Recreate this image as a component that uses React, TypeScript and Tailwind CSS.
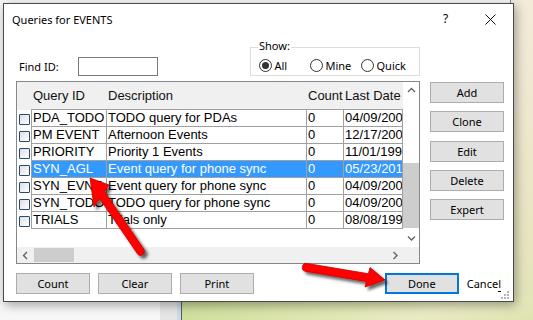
const rows = [
	{id: 'PDA_TODO', desc: 'TODO query for PDAs', count: '0', date: '04/09/2008'},
	{id: 'PM EVENT', desc: 'Afternoon Events', count: '0', date: '12/17/2009'},
	{id: 'PRIORITY', desc: 'Priority 1 Events', count: '0', date: '11/01/1994'},
	{id: 'SYN_AGL', desc: 'Event query for phone sync', count: '0', date: '05/23/2012', selected: true},
	{id: 'SYN_EVNT', desc: 'Event query for phone sync', count: '0', date: '04/09/2008'},
	{id: 'SYN_TODO', desc: 'TODO query for phone sync', count: '0', date: '04/09/2008'},
	{id: 'TRIALS', desc: 'Trials only', count: '0', date: '08/08/1999'}
];

function Btn({label, focus, className = ''}: {label: string; focus?: boolean; className?: string}) {
	return (
		<button
			className={`block w-[74px] h-[21px] bg-[#e1e1e1] text-[11px] leading-none text-black ${
				focus ? 'border-2 border-[#0078d7]' : 'border border-[#adadad]'
			} ${className}`}
		>
			{label}
		</button>
	);
}

function Radio({label, checked}: {label: string; checked?: boolean}) {
	return (
		<div className="w-[51px] flex items-center gap-[3px]">
			<div className="w-[13px] h-[13px] rounded-full border border-[#333] bg-white flex items-center justify-center">
				{checked && <div className="w-[7px] h-[7px] rounded-full bg-[#333]"/>}
			</div>
			<span className="text-[11px] leading-[14px]">{label}</span>
		</div>
	);
}

function Chevron({dir}: {dir: 'up' | 'down' | 'left' | 'right'}) {
	const d = {
		up: 'M1 5 L4.5 1.5 L8 5',
		down: 'M1 1.5 L4.5 5 L8 1.5',
		left: 'M5 1 L1.5 4.5 L5 8',
		right: 'M1.5 1 L5 4.5 L1.5 8'
	}[dir];
	const vertical = dir === 'up' || dir === 'down';
	return (
		<svg width={vertical ? 9 : 7} height={vertical ? 7 : 9} viewBox={vertical ? '0 0 9 7' : '0 0 7 9'}>
			<path d={d} fill="none" stroke="#606060" strokeWidth="1.3"/>
		</svg>
	);
}

export default function App() {
	const cell = 'h-[17px] border-b border-r border-[#a0a0a0] pl-[1px] overflow-hidden whitespace-nowrap';
	return (
		<div className="relative w-[533px] h-[320px] overflow-hidden bg-[linear-gradient(165deg,#f7f1e3_0%,#f0e7d0_55%,#e2e4b6_100%)] font-['Noto_Sans',sans-serif] text-black">
			{/* windows behind the dialog */}
			<div className="absolute left-0 top-0 w-[511px] h-[300px] bg-[#f6f6f6] border-r border-[#8a8a8a]"/>
			<div className="absolute left-0 top-[296px] w-[160px] h-[24px] bg-[#f7f7f7]"/>
			<div className="absolute left-[160px] top-[296px] w-[17px] h-[24px] bg-[#e6e6e6]"/>
			<div className="absolute left-[177px] top-[296px] w-[5px] h-[24px] bg-[#cfdbea] border-r border-[#5a5a5a]"/>
			<div className="absolute left-[182px] top-[296px] right-0 bottom-0 bg-[linear-gradient(160deg,#c8dc96_0%,#dfe6b0_45%,#eaeac4_70%,#dfe3b0_100%)]"/>

			{/* dialog */}
			<div className="absolute left-[3px] top-[3px] w-[511px] h-[299px] border border-[#4a4a4a] bg-white shadow-[2px_3px_10px_rgba(0,0,0,0.35)] flex flex-col">
				<div className="h-[30px] flex items-center pl-[8px]">
					<span className="text-[11px] leading-none">Queries for EVENTS</span>
					<div className="ml-auto flex h-full">
						<div className="w-[45px] h-full flex items-center justify-center text-[12px]">?</div>
						<div className="w-[45px] h-full flex items-center justify-center">
							<svg width="11" height="11" viewBox="0 0 11 11">
								<path d="M0.5 0.5 L10.5 10.5 M10.5 0.5 L0.5 10.5" stroke="#111" strokeWidth="1"/>
							</svg>
						</div>
					</div>
				</div>

				<div className="px-[12px] flex flex-col">
					{/* find + show */}
					<div className="h-[47px] flex items-start">
						<div className="mt-[23px] flex items-center">
							<span className="w-[62px] pl-[3px] text-[11px] leading-[14px]">Find ID:</span>
							<div className="w-[80px] h-[19px] border border-[#7a7a7a] bg-white"/>
						</div>
						<div className="ml-[92px] mt-[12.5px] relative w-[170px] h-[29px] border border-[#dcdcdc]">
							<span className="absolute left-[7px] top-[-9px] px-[1px] bg-white text-[11px] leading-[14px]">Show:</span>
							<div className="flex pt-[11px] pl-[7.5px]">
								<Radio label="All" checked/>
								<Radio label="Mine"/>
								<Radio label="Quick"/>
							</div>
						</div>
					</div>

					{/* list + side buttons */}
					<div className="h-[183px] flex">
						<div className="w-[404px] h-[183px] border border-[#828790] flex flex-col font-['Liberation_Sans',Arial,sans-serif] text-[13px] leading-[16px]">
							<div className="h-[165px] flex">
								<div className="w-[386px] flex flex-col">
									<div className="h-[28px] flex bg-[#f0f0f0]">
										<div className="w-[14px]"/>
										<div className="flex-1 flex items-center border-b border-[#a0a0a0] text-[#111]">
											<span className="w-[76px] pl-[2px]">Query ID</span>
											<span className="w-[200px] pl-[1px]">Description</span>
											<span className="w-[37px] pl-[1px]">Count</span>
											<span className="w-[59px] pl-[1px] overflow-hidden whitespace-nowrap">Last Date</span>
										</div>
									</div>
									{rows.map((r) => {
										const sel = r.selected ? 'bg-[#3399ff] text-white' : 'bg-white';
										return (
											<div key={r.id + r.date} className="h-[17px] flex">
												<div className="w-[14px] pl-[2px] pt-[4px]">
													<div className="w-[11px] h-[11px] border border-[#2a4a6e] rounded-[1px] bg-[linear-gradient(135deg,#dcdfe4,#ffffff)]"/>
												</div>
												<div className={`w-[76px] border-l ${cell} ${sel}`}>{r.id}</div>
												<div className={`w-[200px] ${cell} ${sel}`}>{r.desc}</div>
												<div className={`w-[37px] ${cell} ${sel}`}>{r.count}</div>
												<div className={`w-[59px] ${cell} ${sel}`}>{r.date}</div>
											</div>
										);
									})}
								</div>
								<div className="w-[16px] bg-white flex flex-col">
									<div className="h-[17px] flex items-center justify-center">
										<Chevron dir="up"/>
									</div>
									<div className="flex-1 flex flex-col">
										<div className="h-[64px]"/>
										<div className="h-[65px] bg-[#cdcdcd]"/>
									</div>
									<div className="h-[17px] flex items-center justify-center">
										<Chevron dir="down"/>
									</div>
								</div>
							</div>
							<div className="h-[16px] flex bg-[#f0f0f0]">
								<div className="w-[386px] flex items-center">
									<div className="w-[16px] flex justify-center">
										<Chevron dir="left"/>
									</div>
									<div className="w-[40px] h-[14px] ml-[1px] bg-[#cdcdcd]"/>
									<div className="flex-1"/>
									<div className="w-[16px] flex justify-center">
										<Chevron dir="right"/>
									</div>
								</div>
								<div className="w-[16px]"/>
							</div>
						</div>
						<div className="ml-[10px] pt-[1px] flex flex-col gap-[8.25px]">
							<Btn label="Add"/>
							<Btn label="Clone"/>
							<Btn label="Edit"/>
							<Btn label="Delete"/>
							<Btn label="Expert"/>
						</div>
					</div>

					{/* bottom buttons */}
					<div className="mt-[9px] h-[21px] flex items-center gap-[8px]">
						<Btn label="Count"/>
						<Btn label="Clear"/>
						<Btn label="Print"/>
						<Btn label="Done" focus className="ml-[123px]"/>
						<span className="text-[11px] leading-[14px]">
							Cance<span className="border-b border-black">l</span>
						</span>
					</div>
				</div>

				<svg className="absolute right-[4px] bottom-[2px]" width="8" height="8" viewBox="0 0 8 8">
					<rect x="6" y="0" width="2" height="2" fill="#b4b4b4"/>
					<rect x="3" y="3" width="2" height="2" fill="#b4b4b4"/>
					<rect x="6" y="3" width="2" height="2" fill="#b4b4b4"/>
					<rect x="0" y="6" width="2" height="2" fill="#b4b4b4"/>
					<rect x="3" y="6" width="2" height="2" fill="#b4b4b4"/>
					<rect x="6" y="6" width="2" height="2" fill="#b4b4b4"/>
				</svg>
			</div>

			{/* red callout arrows */}
			<svg className="absolute left-0 top-0 pointer-events-none" width="533" height="320" viewBox="0 0 533 320">
				<defs>
					<filter id="sh" x="-20%" y="-20%" width="140%" height="140%">
						<feDropShadow dx="3" dy="3" stdDeviation="1.8" floodColor="#000" floodOpacity="0.6"/>
					</filter>
				</defs>
				<g filter="url(#sh)" fill="#ff0000" stroke="#c40000" strokeWidth="0.8" strokeLinejoin="round">
					<path d="M90 178 L109 185 L104.5 191.6 L144 249.5 A4 4 0 0 1 138 254.5 L99.7 198.6 L94 207 Z"/>
					<path d="M385 280 L370 267.5 L368.4 273.7 L307.3 263.5 A4 4 0 0 0 305.3 271.3 L366.4 281.5 L365 287 Z"/>
				</g>
			</svg>
		</div>
	);
}
